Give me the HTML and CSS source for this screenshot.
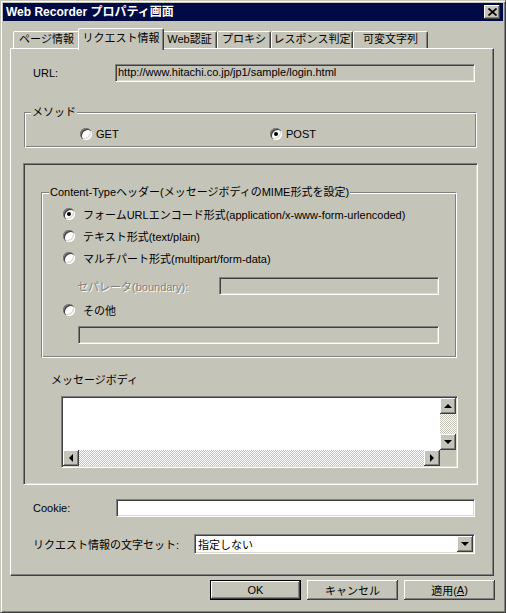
FILE: index.html
```html
<!DOCTYPE html>
<html lang="ja">
<head>
<meta charset="utf-8">
<title>Web Recorder プロパティ画面</title>
<link rel="stylesheet" href="styles.css">
</head>
<body>
<div class="window">
  <div class="titlebar">
    <span class="title">Web Recorder プロパティ画面</span>
    <span class="close"><svg width="9" height="8" viewBox="0 0 9 8"><path d="M0.5 0.5L8.5 7.5M8.5 0.5L0.5 7.5" stroke="#000" stroke-width="1.7"/></svg></span>
  </div>
  <div class="content">
    <div class="tabs">
      <div class="tab w1">ページ情報</div>
      <div class="tab active w2">リクエスト情報</div>
      <div class="tab w3">Web認証</div>
      <div class="tab w4">プロキシ</div>
      <div class="tab w5">レスポンス判定</div>
      <div class="tab w6">可変文字列</div>
    </div>
    <div class="panel">
      <div class="row url-row">
        <span class="row-label url-label">URL:</span>
        <div class="field readonly url-field">http://www.hitachi.co.jp/jp1/sample/login.html</div>
      </div>

      <fieldset class="group method">
        <legend>メソッド</legend>
        <div class="method-opts">
          <div class="opt get"><span class="radio"></span><span>GET</span></div>
          <div class="opt"><span class="radio checked"></span><span>POST</span></div>
        </div>
      </fieldset>

      <div class="frame">
        <fieldset class="group ctype">
          <legend>Content-Typeヘッダー(メッセージボディのMIME形式を設定)</legend>
          <div class="ctype-opts">
            <div class="opt line"><span class="radio checked"></span><span>フォームURLエンコード形式(application/x-www-form-urlencoded)</span></div>
            <div class="opt line"><span class="radio"></span><span>テキスト形式(text/plain)</span></div>
            <div class="opt line"><span class="radio"></span><span>マルチパート形式(multipart/form-data)</span></div>
            <div class="sep-row">
              <span class="disabled sep-label">セパレータ(boundary):</span>
              <div class="field readonly sep-field"></div>
            </div>
            <div class="opt line other"><span class="radio"></span><span>その他</span></div>
            <div class="field readonly other-field"></div>
          </div>
        </fieldset>

        <div class="body-label">メッセージボディ</div>
        <div class="textarea">
          <div class="ta-text"></div>
          <div class="vscroll">
            <div class="sbtn"><span class="arr up"></span></div>
            <div class="track"></div>
            <div class="sbtn"><span class="arr down"></span></div>
          </div>
          <div class="hscroll">
            <div class="sbtn"><span class="arr left"></span></div>
            <div class="track"></div>
            <div class="sbtn"><span class="arr right"></span></div>
          </div>
          <div class="corner"></div>
        </div>
      </div>

      <div class="row cookie-row">
        <span class="row-label cookie-label">Cookie:</span>
        <div class="field white cookie-field"></div>
      </div>

      <div class="row charset-row">
        <span class="row-label charset-label">リクエスト情報の文字セット:</span>
        <div class="select">
          <span class="select-text">指定しない</span>
          <span class="sbtn select-btn"><span class="arr down"></span></span>
        </div>
      </div>
    </div>

    <div class="buttons">
      <div class="btn default">OK</div>
      <div class="btn">キャンセル</div>
      <div class="btn">適用(<u>A</u>)</div>
    </div>
  </div>
</div>
</body>
</html>
```
FILE: styles.css
```css
* { box-sizing: border-box; }
html, body { margin: 0; padding: 0; background: #c5c4b8; }
body {
  font-family: "Liberation Sans", "Noto Sans CJK JP", sans-serif;
  font-size: 11px;
  color: #000;
}

.window {
  width: 506px;
  height: 613px;
  background: #c5c4b8;
  border: 1px solid;
  border-color: #c5c4b8 #404040 #404040 #c5c4b8;
  box-shadow: inset 1px 1px #fff, inset -1px -1px #808080;
  padding: 2px;
  display: flex;
  flex-direction: column;
}

.titlebar {
  height: 18px;
  flex: none;
  background: #000b45;
  color: #fff;
  font-weight: bold;
  font-size: 12px;
  display: flex;
  align-items: center;
  justify-content: space-between;
  padding: 0 3px 0 3px;
  line-height: 16px;
}
.close {
  width: 16px;
  height: 14px;
  background: #c5c4b8;
  box-shadow: inset -1px -1px #404040, inset 1px 1px #fff, inset -2px -2px #808080;
  display: flex;
  align-items: center;
  justify-content: center;
}

.content {
  padding: 0 9px 0 7px;
  display: flex;
  flex-direction: column;
}

/* tabs */
.tabs {
  height: 27px;
  display: flex;
  align-items: flex-end;
  padding-left: 3px;
}
.tab {
  height: 17px;
  border: 1px solid;
  border-bottom: none;
  border-color: #fff #404040 transparent #fff;
  box-shadow: inset -1px 0 #808080;
  border-radius: 2px 2px 0 0;
  text-align: center;
  line-height: 15px;
  white-space: nowrap;
  background: #c5c4b8;
}
.tab.active {
  height: 22px;
  margin: 0 -2px -2px -2px;
  position: relative;
  z-index: 1;
  padding-bottom: 2px;
  line-height: 18px;
}
.w1 { width: 67px; }
.w2 { width: 86px; }
.w3 { width: 55px; }
.w4 { width: 54px; }
.w5 { width: 82px; }
.w6 { width: 75px; }

/* panel */
.panel {
  width: 484px;
  height: 528px;
  border: 1px solid;
  border-color: #fff #404040 #404040 #fff;
  box-shadow: inset -1px -1px #808080;
  display: flex;
  flex-direction: column;
  align-items: flex-start;
}

.row {
  display: flex;
  align-items: center;
  margin-left: 22px;
  white-space: nowrap;
}
.url-row { margin-top: 15px; }
.url-label { width: 82px; }
.cookie-row { margin-top: 14px; }
.cookie-label { width: 83px; }
.charset-row { margin-top: 17px; }
.charset-label { width: 161px; }

.field {
  height: 18px;
  border: 1px solid;
  border-color: #808080 #fff #fff #808080;
  box-shadow: inset 1px 1px #404040, inset -1px -1px #dcdbd0;
  padding: 0 2px;
  line-height: 15px;
  white-space: nowrap;
  overflow: hidden;
}
.readonly { background: #c5c4b8; }
.white { background: #fff; }
.url-field { width: 360px; }
.cookie-field { width: 359px; }

/* group boxes */
.group {
  margin: 0;
  padding: 0;
  min-width: 0;
  border: 1px solid;
  border-color: #808080 #fff #fff #808080;
  box-shadow: inset 1px 1px #fff, inset -1px -1px #808080;
}
.group legend {
  padding: 0 1px;
  line-height: 14px;
  background: #c5c4b8;
  white-space: nowrap;
}
.method {
  margin: 23px 0 0 13px;
  width: 453px;
}
.method legend { margin-left: 6px; }
.method-opts {
  display: flex;
  padding: 8px 0 6px 55px;
}
.opt {
  display: flex;
  align-items: center;
  gap: 4px;
  height: 14px;
  white-space: nowrap;
}
.opt.get { width: 190px; }

.radio {
  width: 12px;
  height: 12px;
  flex: none;
  border-radius: 50%;
  background: #fff;
  box-shadow: inset 1px 1px #808080, inset 2px 2px #404040, inset -1px -1px #fff, inset -2px -2px #d8d7cc;
  display: flex;
  align-items: center;
  justify-content: center;
}
.radio.checked::after {
  content: "";
  width: 4px;
  height: 4px;
  border-radius: 50%;
  background: #000;
}

/* sunken frame */
.frame {
  margin: 15px 0 0 12px;
  width: 455px;
  height: 322px;
  border: 1px solid;
  border-color: #808080 #fff #fff #808080;
  box-shadow: inset 1px 1px #404040, inset -1px -1px #dcdbd0;
  display: flex;
  flex-direction: column;
  align-items: flex-start;
}
.ctype {
  margin: 21px 0 0 17px;
  width: 416px;
}
.ctype legend { margin-left: 7px; }
.ctype-opts {
  padding: 4px 0 13px 21px;
  display: flex;
  flex-direction: column;
  align-items: flex-start;
}
.opt.line {
  height: 22px;
  gap: 8px;
}
.sep-row {
  margin-top: 8px;
  height: 18px;
  display: flex;
  align-items: center;
}
.disabled {
  color: #808080;
  text-shadow: 1px 1px #fff;
}
.sep-label { width: 142px; margin-left: 14px; white-space: nowrap; }
.sep-field { width: 220px; }
.opt.other { margin-top: 4px; }
.other-field { margin: 5px 0 0 15px; width: 361px; }

.body-label {
  margin: 15px 0 0 27px;
  line-height: 14px;
}

.textarea {
  margin: 9px 0 0 37px;
  width: 397px;
  height: 72px;
  border: 1px solid;
  border-color: #808080 #fff #fff #808080;
  box-shadow: inset 1px 1px #404040, inset -1px -1px #dcdbd0;
  padding: 1px;
  display: grid;
  grid-template-columns: 1fr 16px;
  grid-template-rows: 1fr 16px;
}
.ta-text { background: #fff; }
.vscroll { display: grid; grid-template-rows: 16px 1fr 16px; }
.hscroll { display: grid; grid-template-columns: 16px 1fr 16px; }
.track {
  background: repeating-conic-gradient(#fff 0 25%, #c5c4b8 0 50%) 0 0 / 2px 2px;
}
.corner { background: #c5c4b8; }
.sbtn {
  width: 16px;
  height: 16px;
  background: #c5c4b8;
  box-shadow: inset -1px -1px #404040, inset 1px 1px #fff, inset -2px -2px #808080;
  display: flex;
  align-items: center;
  justify-content: center;
}
.arr { width: 0; height: 0; border-style: solid; }
.arr.up { border-width: 0 4px 4px 4px; border-color: transparent transparent #000 transparent; margin-top: -1px; }
.arr.down { border-width: 4px 4px 0 4px; border-color: #000 transparent transparent transparent; }
.arr.left { border-width: 4px 4px 4px 0; border-color: transparent #000 transparent transparent; }
.arr.right { border-width: 4px 0 4px 4px; border-color: transparent transparent transparent #000; }

/* select */
.select {
  width: 281px;
  height: 20px;
  border: 1px solid;
  border-color: #808080 #fff #fff #808080;
  box-shadow: inset 1px 1px #404040, inset -1px -1px #dcdbd0;
  background: #fff;
  padding: 1px;
  display: flex;
  align-items: center;
}
.select-text { flex: 1; padding-left: 2px; }
.select-btn { flex: none; }

/* buttons */
.buttons {
  margin-top: 4px;
  width: 485px;
  display: flex;
  justify-content: flex-end;
  gap: 6px;
}
.btn {
  width: 91px;
  height: 20px;
  background: #c5c4b8;
  box-shadow: inset -1px -1px #404040, inset 1px 1px #fff, inset -2px -2px #808080;
  display: flex;
  align-items: center;
  justify-content: center;
  white-space: nowrap;
}
.btn.default {
  border: 1px solid #000;
}
```
